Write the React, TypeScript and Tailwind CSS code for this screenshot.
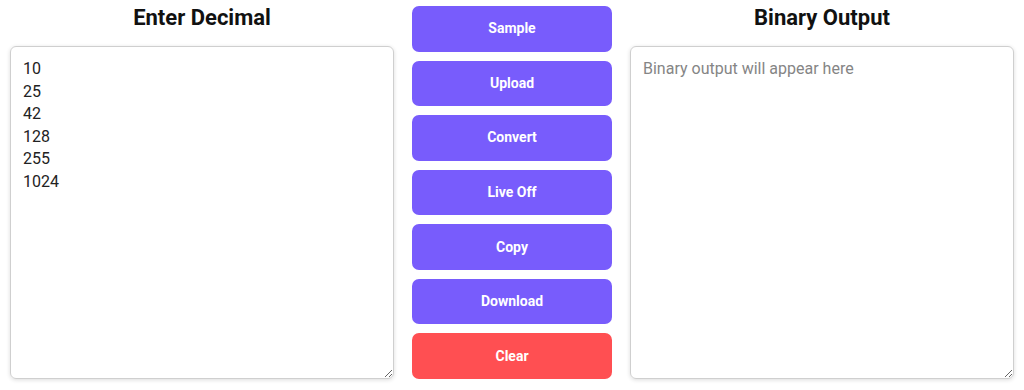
import { useState } from "react"

const buttons = [
  { label: "Sample", danger: false },
  { label: "Upload", danger: false },
  { label: "Convert", danger: false },
  { label: "Live Off", danger: false },
  { label: "Copy", danger: false },
  { label: "Download", danger: false },
  { label: "Clear", danger: true },
]

export default function App() {
  const [input, setInput] = useState("10\n25\n42\n128\n255\n1024")
  const [output, setOutput] = useState("")

  return (
    <div className="flex h-[390px] w-full gap-[18px] bg-white px-[10px] pt-[6px] pb-[11px] font-['Roboto',sans-serif]">
      <div className="flex flex-1 flex-col">
        <h2 className="mb-4 text-center text-[22px] leading-[24px] font-bold text-[#111]">
          Enter Decimal
        </h2>
        <textarea
          value={input}
          onChange={(e) => setInput(e.target.value)}
          className="flex-1 resize rounded-[6px] border border-[#cfcfcf] px-3 py-[11px] text-[16px] leading-[22.6px] text-[#222] shadow-[0_1px_4px_rgba(0,0,0,0.14)] outline-none"
        />
      </div>

      <div className="flex w-[200px] flex-col gap-[9px]">
        {buttons.map((b) => (
          <button
            key={b.label}
            className={`flex-1 rounded-[7px] text-[14px] font-bold text-white ${
              b.danger ? "bg-[#ff4f52]" : "bg-[#785cfc]"
            }`}
          >
            {b.label}
          </button>
        ))}
      </div>

      <div className="flex flex-1 flex-col">
        <h2 className="mb-4 text-center text-[22px] leading-[24px] font-bold text-[#111]">
          Binary Output
        </h2>
        <textarea
          value={output}
          onChange={(e) => setOutput(e.target.value)}
          placeholder="Binary output will appear here"
          className="flex-1 resize rounded-[6px] border border-[#cfcfcf] px-3 py-[11px] text-[16px] leading-[22.6px] text-[#222] shadow-[0_1px_4px_rgba(0,0,0,0.14)] outline-none placeholder:text-[#858585]"
        />
      </div>
    </div>
  )
}
